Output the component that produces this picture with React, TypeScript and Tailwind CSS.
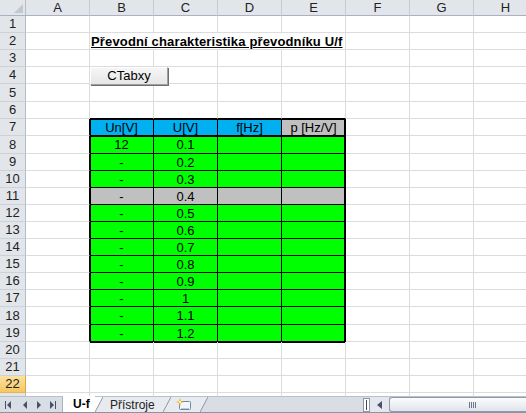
import React from "react";

const COLS = ["A", "B", "C", "D", "E", "F", "G", "H"];

// row heights in px for rows 1..23 (row 23 is cut by the sheet tabs)
const ROW_H = [17, 17, 17, 17, 18, 17, 17, 18, 17, 17, 17, 17, 17, 17, 17, 17, 17, 18, 17, 17, 17, 17, 17];
const H: Record<number, string> = { 17: "h-[17px]", 18: "h-[18px]" };

const CYAN = "bg-[#00b0f0]";
const GREEN = "bg-[#00ff00]";
const GRAY = "bg-[#c0c0c0]";

type TRow = { vals: string[]; fills: string[] };

const U_VALUES = ["0.1", "0.2", "0.3", "0.4", "0.5", "0.6", "0.7", "0.8", "0.9", "1", "1.1", "1.2"];

const TABLE: Record<number, TRow> = {
  7: { vals: ["Un[V]", "U[V]", "f[Hz]", "p [Hz/V]"], fills: [CYAN, CYAN, CYAN, GRAY] },
};
U_VALUES.forEach((u, i) => {
  const r = 8 + i;
  const fill = r === 11 ? GRAY : GREEN;
  TABLE[r] = { vals: [r === 8 ? "12" : "-", u, "", ""], fills: [fill, fill, fill, fill] };
});

// thick outer border / header separator drawn as inset shadows on the table cells
function edge(r: number, ci: number) {
  const top = r === 7 || r === 8;
  if (ci === 1) return top ? "shadow-[inset_1px_1px_0_#000]" : "shadow-[inset_1px_0_0_#000]";
  if (ci === 4) return top ? "shadow-[inset_-1px_1px_0_#000]" : "shadow-[inset_-1px_0_0_#000]";
  return top ? "shadow-[inset_0_1px_0_#000]" : "";
}

function RowHead({ r }: { r: number }) {
  if (r === 22) {
    return (
      <div className="flex w-[26px] shrink-0 items-center justify-center border-r border-b border-r-[#e0a53c] border-b-[#e8b44f] bg-linear-to-b from-[#fbe0a0] to-[#f5c85f] text-[13px] text-[#222]">
        {r}
      </div>
    );
  }
  return (
    <div className="flex w-[26px] shrink-0 items-center justify-center border-r border-b border-r-[#b4bcc6] border-b-[#cdd2d9] bg-[#e2e6eb] text-[13px] text-[#222]">
      {r}
    </div>
  );
}

function SheetCell({ r, ci }: { r: number; ci: number }) {
  const t = TABLE[r];
  const inTable = !!t && ci >= 1 && ci <= 4;

  if (inTable) {
    return (
      <div
        className={`flex w-[64px] shrink-0 items-center justify-center border-r border-b border-black text-[13px] leading-none text-black ${t.fills[ci - 1]} ${edge(r, ci)}`}
      >
        {t.vals[ci - 1]}
      </div>
    );
  }

  let cls = "flex w-[64px] shrink-0 border-r border-b border-[#dadcdd]";
  if (r === 2 && ci >= 1 && ci <= 3) cls += " border-r-transparent";
  if (r === 6 && ci >= 1 && ci <= 4) cls += " border-b-black";
  if (ci === 0 && r >= 7 && r <= 19) cls += " border-r-black";
  if (r === 20 && ci >= 1 && ci <= 4) cls += " shadow-[inset_0_1px_0_#000]";

  if (r === 2 && ci === 1) {
    return (
      <div className={`${cls} items-end justify-start`}>
        <span className="whitespace-nowrap pl-px text-[13px] font-bold leading-[15px] tracking-[0.15px] text-black underline underline-offset-[1px]">
          Převodní charakteristika převodníku U/f
        </span>
      </div>
    );
  }

  if (r === 4 && ci === 1) {
    return (
      <div className={`${cls} relative`}>
        <button className="absolute left-0 top-0 z-10 flex h-[18px] w-[78px] items-center justify-center border border-t-white border-l-white border-r-[#a0a0a0] border-b-[#a0a0a0] bg-linear-to-b from-[#f6f6f6] to-[#e6e6e6] text-[13px] text-black shadow-[1px_1px_0_#6e6e6e]">
          CTabxy
        </button>
      </div>
    );
  }

  return <div className={cls} />;
}

function Slant({ fill, under }: { fill: string; under: string }) {
  return (
    <svg width="8" height="15" viewBox="0 0 8 15" className="shrink-0">
      <rect width="8" height="15" fill={under} />
      <polygon points="0,0 8,0 0,15" fill={fill} />
      <line x1="0" y1="15" x2="8" y2="0" stroke="#8d98a7" strokeWidth="1" />
    </svg>
  );
}

function NavIcon({ dir, bar }: { dir: "l" | "r"; bar?: boolean }) {
  return (
    <svg width="7" height="8" viewBox="0 0 7 8" className="shrink-0">
      {dir === "l" ? (
        <>
          {bar && <rect x="0" y="0" width="1" height="8" fill="#44536a" />}
          <polygon points={bar ? "6,0 6,8 2,4" : "5,0 5,8 1,4"} fill="#44536a" />
        </>
      ) : (
        <>
          <polygon points={bar ? "1,0 1,8 5,4" : "2,0 2,8 6,4"} fill="#44536a" />
          {bar && <rect x="6" y="0" width="1" height="8" fill="#44536a" />}
        </>
      )}
    </svg>
  );
}

function TabBar() {
  const bar = "#d9dee5";
  const inactive = "#e7eaef";
  return (
    <div className="flex h-[17px] border-t border-b border-t-[#b9c1cb] border-b-[#8a94a2] bg-[#d9dee5] text-[12px]">
      {/* sheet navigation */}
      <div className="flex w-[63px] shrink-0 items-center border-r border-[#a9b2be]">
        <span className="ml-[5px] flex">
          <NavIcon dir="l" bar />
        </span>
        <span className="ml-[10px] flex">
          <NavIcon dir="l" />
        </span>
        <span className="ml-[6px] flex">
          <NavIcon dir="r" />
        </span>
        <span className="ml-[7px] flex">
          <NavIcon dir="r" bar />
        </span>
      </div>

      {/* active tab */}
      <div className="-mt-px flex h-[16px] w-[32px] shrink-0 items-center bg-white pl-[10px] font-bold text-black">
        U-f
      </div>
      <Slant fill="#ffffff" under={inactive} />

      <div className="flex w-[60px] shrink-0 items-center bg-[#e7eaef] pl-[7px] text-[#222]">Přístroje</div>
      <Slant fill={inactive} under={inactive} />

      {/* insert sheet tab */}
      <div className="flex w-[29px] shrink-0 items-center bg-[#e7eaef] pl-[5px]">
        <svg width="16" height="13" viewBox="0 0 16 13">
          <rect x="3.5" y="3.5" width="11" height="8" rx="1" fill="#f3f6fa" stroke="#6f88ab" />
          <path d="M5 10.5 H13" stroke="#b9c8dc" />
          <path d="M4 0 L5 3 L8 4 L5 5 L4 8 L3 5 L0 4 L3 3 Z" fill="#f5b324" />
          <circle cx="4" cy="4" r="1.2" fill="#fff3b0" />
        </svg>
      </div>
      <Slant fill={inactive} under={bar} />

      <div className="flex-1" />

      {/* split box + horizontal scroll bar */}
      <div className="flex w-[7px] shrink-0 items-center">
        <div className="flex h-[14px] w-[7px] items-center justify-center border border-[#8e99a8] bg-white">
          <div className="h-[10px] w-px bg-[#3d4a5c]" />
        </div>
      </div>
      <div className="flex w-[19px] shrink-0 items-center justify-center bg-[#e4e8ee]">
        <svg width="5" height="8" viewBox="0 0 5 8">
          <polygon points="5,0 5,8 0,4" fill="#44536a" />
        </svg>
      </div>
      <div className="flex w-[137px] shrink-0 items-center rounded-l-[3px] border border-r-0 border-[#8f9bab] bg-linear-to-b from-[#fbfcfd] to-[#dfe4eb]">
        <div className="ml-[79px] flex h-[6px] gap-px">
          <div className="w-px bg-[#6b7788]" />
          <div className="w-px bg-[#6b7788]" />
          <div className="w-px bg-[#6b7788]" />
          <div className="w-px bg-[#6b7788]" />
        </div>
      </div>
    </div>
  );
}

export default function App() {
  return (
    <div className="h-[413px] w-[526px] overflow-hidden bg-white font-['Liberation_Sans',Arial,sans-serif]">
      <div className="h-[396px] overflow-hidden">
        {/* column headers */}
        <div className="flex h-[16px]">
          <div className="flex w-[26px] shrink-0 items-end justify-end border-r border-b border-r-[#b4bcc6] border-b-[#a9b3c0] bg-[#e2e6eb] p-[2px]">
            <svg width="9" height="9" viewBox="0 0 9 9">
              <polygon points="9,0 9,9 0,9" fill="#c2c8d0" />
            </svg>
          </div>
          {COLS.map((c) => (
            <div
              key={c}
              className="flex w-[64px] shrink-0 items-center justify-center border-r border-b border-r-[#c7ccd3] border-b-[#a9b3c0] bg-[#e2e6eb] text-[13px] leading-none text-[#222]"
            >
              {c}
            </div>
          ))}
        </div>

        {ROW_H.map((h, i) => {
          const r = i + 1;
          return (
            <div key={r} className={`flex ${H[h]}`}>
              <RowHead r={r} />
              {COLS.map((c, ci) => (
                <SheetCell key={c} r={r} ci={ci} />
              ))}
            </div>
          );
        })}
      </div>
      <TabBar />
    </div>
  );
}
